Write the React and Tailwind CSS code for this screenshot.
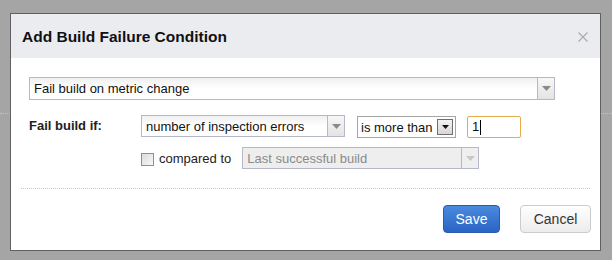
import React from "react";

function Arrow({ color = "#8a8a8a" }) {
  return (
    <svg width="9" height="5" viewBox="0 0 9 5">
      <path d="M0 0 H9 L4.5 5 Z" fill={color} />
    </svg>
  );
}

function Combo({ width, text, disabled }) {
  return (
    <div
      className={`flex h-[22px] border border-[#b5b8c8] ${disabled ? "bg-[#eeeeee]" : "bg-gradient-to-b from-[#f0f0f0] via-white to-white"}`}
      style={{ width }}
    >
      <div
        className={`flex-1 flex items-center pl-[4px] text-[13px] leading-none ${disabled ? "text-[#8a8a8a]" : "text-[#111]"}`}
      >
        {text}
      </div>
      <div
        className={`w-[17px] flex items-center justify-center border-l border-[#b5b8c8] ${disabled ? "bg-[#efefef]" : "bg-gradient-to-b from-[#f7f7f7] to-[#e4e4e4]"}`}
      >
        <Arrow color={disabled ? "#c8c8c8" : "#8a8a8a"} />
      </div>
    </div>
  );
}

export default function App() {
  return (
    <div
      className="relative w-[612px] h-[260px] bg-[#a5a5a5] overflow-hidden"
      style={{ fontFamily: '"Liberation Sans", Arial, sans-serif' }}
    >
      <div className="pt-[113px]">
        <div className="border-t border-dotted border-[#c4c4c4]" />
      </div>

      <div className="absolute left-[10px] top-[13px] w-[591px] h-[238px] border border-[#606060] bg-white flex flex-col">
        <div className="h-[44px] bg-[#ebecf0] flex items-center justify-between pl-[11px] pr-[12px]">
          <span className="text-[15.5px] font-bold text-[#111] mt-[1px]">
            Add Build Failure Condition
          </span>
          <svg width="10" height="10" viewBox="0 0 10 10" className="mt-[2px]">
            <path d="M0.5 0.5 L9.5 9.5 M9.5 0.5 L0.5 9.5" stroke="#a9aaae" strokeWidth="1.1" />
          </svg>
        </div>

        <div className="pl-[18px] pt-[19px] flex flex-col">
          <div className="h-[23px]">
            <div className="flex h-[23px] w-[526px] border border-[#b5b8c8] bg-gradient-to-b from-[#f0f0f0] via-white to-white">
              <div className="flex-1 flex items-center pl-[4px] text-[13px] text-[#111] leading-none">
                Fail build on metric change
              </div>
              <div className="w-[17px] flex items-center justify-center border-l border-[#b5b8c8] bg-gradient-to-b from-[#f7f7f7] to-[#e4e4e4]">
                <Arrow />
              </div>
            </div>
          </div>

          <div className="flex items-start mt-[15px] h-[23px]">
            <div className="w-[112px] h-[22px] flex items-center text-[13px] font-bold text-[#222]">
              Fail build if:
            </div>
            <Combo width={204} text="number of inspection errors" />
            <div className="ml-[12px] mt-[1px] w-[99px] h-[22px] flex border border-[#a5a5a5] bg-white">
              <div className="flex-1 flex items-center pl-[3px] text-[13px] text-[#111] leading-none">
                is more than
              </div>
              <div className="w-[16px] h-[16px] my-auto mr-[2px] border border-[#6e6e6e] bg-gradient-to-b from-[#f2f2f2] to-[#d8d8d8] flex items-center justify-center">
                <svg width="7" height="4" viewBox="0 0 7 4">
                  <path d="M0 0 H7 L3.5 4 Z" fill="#111" />
                </svg>
              </div>
            </div>
            <div className="ml-[11px] mt-[1px] w-[54px] h-[22px] border border-[#e3ad4f] rounded-[2px] bg-white flex items-center pl-[4px] text-[13px] text-[#111]">
              1<span className="inline-block w-px h-[15px] bg-black ml-[1px]" />
            </div>
          </div>

          <div className="flex items-center mt-[9px] h-[22px] pl-[112px]">
            <div className="w-[13px] h-[13px] border border-[#8e8f8f] bg-gradient-to-br from-[#dcdcdc] to-[#f8f8f8] mt-[2px]" />
            <span className="ml-[5px] text-[13px] text-[#222] mt-[2px]">compared to</span>
            <div className="ml-[11px]">
              <Combo width={237} text="Last successful build" disabled />
            </div>
          </div>
        </div>

        <div className="mt-[19px] mx-[10px] border-t border-dotted border-[#c8c8c8]" />

        <div className="flex justify-end gap-[20px] pr-[9px] pt-[16px]">
          <div className="w-[57px] h-[28px] rounded-[4px] border border-[#2a5aa8] bg-gradient-to-b from-[#4a8ae0] to-[#2a64c2] flex items-center justify-center text-[14px] text-white">
            Save
          </div>
          <div className="w-[71px] h-[28px] rounded-[4px] border border-[#cccccc] bg-gradient-to-b from-white to-[#ececec] flex items-center justify-center text-[14px] text-[#333]">
            Cancel
          </div>
        </div>
      </div>
    </div>
  );
}
